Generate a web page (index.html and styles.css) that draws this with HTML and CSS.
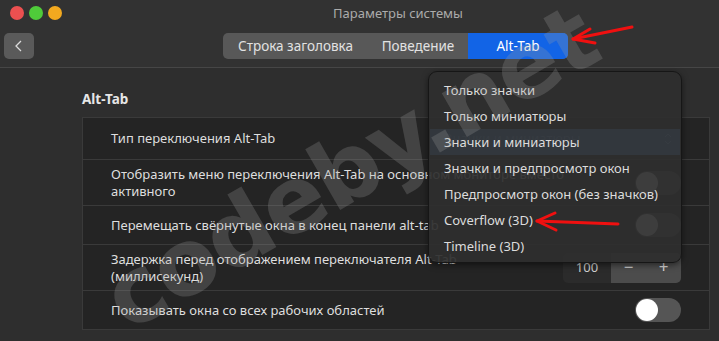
FILE: index.html
```html
<!DOCTYPE html>
<html lang="ru">
  <head>
    <meta charset="UTF-8" />
    <meta name="viewport" content="width=device-width, initial-scale=1.0" />
    <title>Параметры системы</title>
    <link rel="stylesheet" href="styles.css">
  </head>
  <body>
    <header class="headerbar">
      <div class="titlebar">
        <div class="lights">
          <span class="light red"></span>
          <span class="light green"></span>
          <span class="light yellow"></span>
        </div>
        <div class="title">Параметры системы</div>
      </div>
      <div class="toolbar">
        <button class="back-btn">
          <svg width="16" height="16" viewBox="0 0 16 16"><polyline points="10,3 5,8 10,13" fill="none" stroke="#dcdcdc" stroke-width="1.3"/></svg>
        </button>
        <div class="switcher">
          <span class="tab tab-wide">Строка заголовка</span>
          <span class="tab">Поведение</span>
          <span class="tab active">Alt-Tab</span>
        </div>
      </div>
    </header>

    <main class="content">
      <h2 class="group-title">Alt-Tab</h2>
      <div class="list">
        <div class="row">
          <span class="label">Тип переключения Alt-Tab</span>
          <div class="combo">
            <span>Значки и миниатюры</span>
            <svg width="10" height="14" viewBox="0 0 10 14"><polyline points="2,5 5,2 8,5" fill="none" stroke="#777" stroke-width="1"/><polyline points="2,9 5,12 8,9" fill="none" stroke="#777" stroke-width="1"/></svg>
          </div>
        </div>
        <div class="row">
          <span class="label">Отобразить меню переключения Alt-Tab на основном мониторе вместо активного</span>
          <span class="switch"><span class="knob"></span></span>
        </div>
        <div class="row">
          <span class="label">Перемещать свёрнутые окна в конец панели alt-tab</span>
          <span class="switch"><span class="knob"></span></span>
        </div>
        <div class="row">
          <span class="label">Задержка перед отображением переключателя Alt-Tab<br>(миллисекунд)</span>
          <div class="spin">
            <span class="spin-value">100</span>
            <span class="spin-btn">−</span>
            <span class="spin-btn">+</span>
          </div>
        </div>
        <div class="row">
          <span class="label">Показывать окна со всех рабочих областей</span>
          <span class="switch"><span class="knob"></span></span>
        </div>
      </div>
    </main>

    <!-- dropdown of the first row -->
    <div class="popover">
      <div class="item">Только значки</div>
      <div class="item">Только миниатюры</div>
      <div class="item selected">Значки и миниатюры</div>
      <div class="item">Значки и предпросмотр окон</div>
      <div class="item">Предпросмотр окон (без значков)</div>
      <div class="item">Coverflow (3D)</div>
      <div class="item">Timeline (3D)</div>
    </div>

    <div class="watermark">codeby.net</div>

    <svg class="marks" width="719" height="341" viewBox="0 0 719 341">
      <g fill="none" stroke="#f01010" stroke-width="3" stroke-linecap="round" stroke-linejoin="round">
        <path d="M632 27 L573 39"/>
        <path d="M590 29 L573 39 L595 43"/>
        <path d="M618 224 L537 221"/>
        <path d="M555 213 L537 221 L556 230"/>
      </g>
    </svg>
  </body>
</html>
```

FILE: styles.css
```css
body {
  margin: 0;
  width: 719px;
  height: 341px;
  overflow: hidden;
  position: relative;
  background-color: #2e2e2e;
  color: #dedede;
  font-family: "Noto Sans", "Open Sans", sans-serif;
  font-size: 13px;
}
.headerbar {
  height: 67px;
  background-color: #323232;
  border-bottom: 1px solid #464646;
}
.titlebar {
  height: 26px;
  display: flex;
  align-items: center;
  position: relative;
}
.lights {
  display: flex;
  gap: 5px;
  padding-left: 10px;
}
.light {
  width: 14px;
  height: 14px;
  border-radius: 50%;
}
.red { background: #ec5050; }
.green { background: #4fcb3a; }
.yellow { background: #f2a91f; }
/* window is wider than the shot, so its centre sits right of 360 */
.title {
  position: absolute;
  left: 77px;
  right: 0;
  text-align: center;
  color: #ababab;
  font-size: 13px;
}
.toolbar {
  display: flex;
  align-items: center;
  padding-top: 7px;
  padding-left: 4px;
}
.back-btn {
  width: 30px;
  height: 26px;
  border: none;
  border-radius: 5px;
  background-color: #5a5a5a;
  display: flex;
  align-items: center;
  justify-content: center;
  padding: 0;
}
.switcher {
  display: flex;
  margin-left: 189px;
  height: 26px;
  border-radius: 5px;
  background-color: #585858;
  overflow: hidden;
}
.tab {
  width: 100px;
  display: flex;
  align-items: center;
  justify-content: center;
  color: #e2e2e2;
  font-size: 13.5px;
}
.tab-wide {
  width: 145px;
}
.tab.active {
  background-color: #1264e6;
  color: #ffffff;
}
.content {
  padding: 21px 9px 0 82px;
}
.group-title {
  margin: 0 0 8px 0;
  font-size: 13.5px;
  font-weight: bold;
  color: #e6e6e6;
  line-height: 20px;
}
.list {
  border: 1px solid #3a3a3a;
  background-color: #242424;
}
.row {
  display: flex;
  align-items: center;
  justify-content: space-between;
  min-height: 26px;
  padding: 6px 28px;
  border-top: 1px solid #3a3a3a;
  line-height: 16.5px;
}
.row:first-child {
  border-top: none;
}
.label {
  max-width: 456px;
}
.combo {
  width: 250px;
  height: 29px;
  display: flex;
  align-items: center;
  justify-content: space-between;
  padding: 0 8px 0 14px;
  box-sizing: border-box;
  color: #666;
}
.switch {
  width: 46px;
  height: 24px;
  border-radius: 12px;
  background-color: #555555;
  display: flex;
  align-items: center;
  padding-left: 1px;
  box-sizing: border-box;
}
.knob {
  width: 22px;
  height: 22px;
  border-radius: 50%;
  background-color: #ffffff;
}
.spin {
  display: flex;
  height: 30px;
  width: 118px;
  border-radius: 5px;
  overflow: hidden;
  background-color: #2b2b2b;
}
.spin-value {
  width: 48px;
  display: flex;
  align-items: center;
  justify-content: center;
  color: #cfcfcf;
}
.spin-btn {
  width: 35px;
  display: flex;
  align-items: center;
  justify-content: center;
  background-color: #4c4c4c;
  color: #d8d8d8;
  font-size: 17px;
}
.popover {
  position: absolute;
  left: 428px;
  top: 71px;
  width: 254px;
  height: 192px;
  padding: 5px 0;
  box-sizing: border-box;
  background-color: rgba(46, 46, 46, 0.93);
  border: 1px solid #161616;
  border-radius: 9px;
  box-shadow: 0 2px 6px rgba(0, 0, 0, 0.5);
}
.item {
  height: 26px;
  line-height: 26px;
  padding-left: 14px;
  margin: 0 1px;
  color: #dcdcdc;
}
.item.selected {
  background-color: rgba(70, 90, 120, 0.22);
}
.watermark {
  position: absolute;
  left: 350px;
  top: 168px;
  transform: translate(-50%, -50%) rotate(-30deg);
  font-family: "DejaVu Sans", sans-serif;
  font-weight: bold;
  font-size: 92px;
  letter-spacing: -2px;
  color: rgba(160, 160, 160, 0.25);
  white-space: nowrap;
  pointer-events: none;
}
.marks {
  position: absolute;
  left: 0;
  top: 0;
  pointer-events: none;
}
```
